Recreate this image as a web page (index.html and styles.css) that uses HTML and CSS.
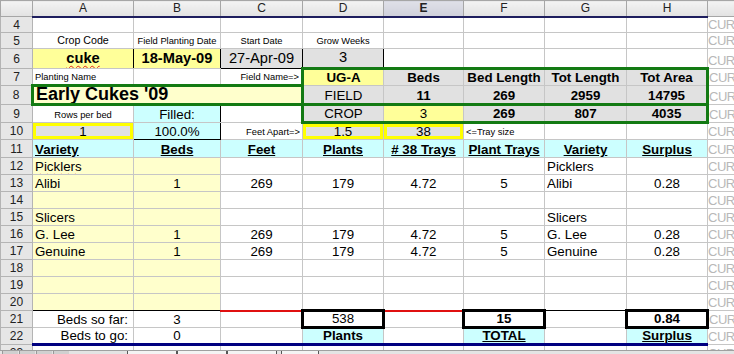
FILE: index.html
```html
<!DOCTYPE html>
<html>
<head>
<meta charset="utf-8">
<link rel="stylesheet" href="styles.css">
</head>
<body>
<div class="viewport">
<table class="sheet">
<colgroup>
<col class="w-rh"><col class="w-a"><col class="w-b"><col class="w-c"><col class="w-d"><col class="w-e"><col class="w-f"><col class="w-g"><col class="w-h"><col class="w-i">
</colgroup>
<tr class="hdr h16">
<th class="corner"></th><th>A</th><th>B</th><th>C</th><th>D</th><th class="sel">E</th><th>F</th><th>G</th><th>H</th><th class="last"></th>
</tr>
<tr class="h16">
<th>4</th><td></td><td></td><td></td><td></td><td></td><td></td><td></td><td></td><td class="cur">CUR</td>
</tr>
<tr class="h16">
<th>5</th><td class="m">Crop Code</td><td class="s">Field Planting Date</td><td class="s">Start Date</td><td class="s">Grow Weeks</td><td></td><td></td><td></td><td></td><td class="cur">CUR</td>
</tr>
<tr class="h20">
<th>6</th><td class="y b big kr"><span class="sp">cuke</span></td><td class="y b big kl kr">18-May-09</td><td class="g big kbox">27-Apr-09</td><td class="g big kbox">3</td><td class="kl"></td><td></td><td></td><td></td><td class="cur">CUR</td>
</tr>
<tr class="h17">
<th>7</th><td class="s l">Planting Name</td><td></td><td class="s r">Field Name=&gt;</td><td class="y b gt gl">UG-A</td><td class="g b gt">Beds</td><td class="g b gt">Bed Length</td><td class="g b gt">Tot Length</td><td class="g b gt gr">Tot Area</td><td class="cur">CUR</td>
</tr>
<tr class="h19">
<th>8</th><td colspan="3" class="py b xl l gt gb gl">Early Cukes '09</td><td class="g gl gb">FIELD</td><td class="g b gb">11</td><td class="g b gb">269</td><td class="g b gb">2959</td><td class="g b gb gr">14795</td><td class="cur">CUR</td>
</tr>
<tr class="h18">
<th>9</th><td class="s">Rows per bed</td><td class="cy kr">Filled:</td><td class="kl"></td><td class="g gl gb">CROP</td><td class="y gb">3</td><td class="g b gb">269</td><td class="g b gb">807</td><td class="g b gb gr">4035</td><td class="cur">CUR</td>
</tr>
<tr class="h17">
<th>10</th><td class="g ybox">1</td><td class="cy kr kb">100.0%</td><td class="s r kl">Feet Apart=&gt;</td><td class="g ybox">1.5</td><td class="g ybox">38</td><td class="s l">&lt;=Tray size</td><td></td><td></td><td class="cur">CUR</td>
</tr>
<tr class="h18">
<th>11</th><td class="cy b u l kt">Variety</td><td class="cy b u kt">Beds</td><td class="cy b u">Feet</td><td class="cy b u">Plants</td><td class="cy b u"># 38 Trays</td><td class="cy b u">Plant Trays</td><td class="cy b u">Variety</td><td class="cy b u">Surplus</td><td class="cur">CUR</td>
</tr>
<tr class="h17">
<th>12</th><td class="py l"><span class="sp">Picklers</span></td><td class="py"></td><td></td><td></td><td></td><td></td><td class="l">Picklers</td><td></td><td class="cur">CUR</td>
</tr>
<tr class="h17">
<th>13</th><td class="py l">Alibi</td><td class="py">1</td><td>269</td><td>179</td><td>4.72</td><td>5</td><td class="l">Alibi</td><td>0.28</td><td class="cur">CUR</td>
</tr>
<tr class="h17">
<th>14</th><td class="py"></td><td class="py"></td><td></td><td></td><td></td><td></td><td></td><td></td><td class="cur">CUR</td>
</tr>
<tr class="h17">
<th>15</th><td class="py l">Slicers</td><td class="py"></td><td></td><td></td><td></td><td></td><td class="l">Slicers</td><td></td><td class="cur">CUR</td>
</tr>
<tr class="h17">
<th>16</th><td class="py l">G. Lee</td><td class="py">1</td><td>269</td><td>179</td><td>4.72</td><td>5</td><td class="l">G. Lee</td><td>0.28</td><td class="cur">CUR</td>
</tr>
<tr class="h17">
<th>17</th><td class="py l">Genuine</td><td class="py">1</td><td>269</td><td>179</td><td>4.72</td><td>5</td><td class="l">Genuine</td><td>0.28</td><td class="cur">CUR</td>
</tr>
<tr class="h17">
<th>18</th><td class="py"></td><td class="py"></td><td></td><td></td><td></td><td></td><td></td><td></td><td class="cur">CUR</td>
</tr>
<tr class="h17">
<th>19</th><td class="py"></td><td class="py"></td><td></td><td></td><td></td><td></td><td></td><td></td><td class="cur">CUR</td>
</tr>
<tr class="h17">
<th>20</th><td class="py kb"></td><td class="py kb"></td><td class="rb"></td><td class="rb"></td><td class="rb"></td><td></td><td class="kb"></td><td></td><td class="cur">CUR</td>
</tr>
<tr class="h17">
<th>21</th><td class="r kt">Beds so far:</td><td class="kt">3</td><td></td><td class="box">538</td><td></td><td class="b box">15</td><td class="kt"></td><td class="b box">0.84</td><td class="cur">CUR</td>
</tr>
<tr class="h17">
<th>22</th><td class="r nb">Beds to go:</td><td class="nb">0</td><td class="nb"></td><td class="cy b nb">Plants</td><td class="nb"></td><td class="cy b u nb">TOTAL</td><td class="nb"></td><td class="cy b u nb">Surplus</td><td class="cur">CUR</td>
</tr>
<tr class="h17">
<th>23</th><td></td><td></td><td></td><td></td><td></td><td></td><td></td><td></td><td class="cur">CUR</td>
</tr>
</table>
</div>
<div class="tabs">
<span class="nav"></span><span class="nav"></span><span class="nav"></span><span class="nav"></span>
<span class="tab"></span><span class="tab"></span><span class="tab"></span><span class="tab short"></span>
</div>
</body>
</html>
```
FILE: styles.css
```css
html, body {
  margin: 0;
  padding: 0;
  overflow: hidden;
  background: #ffffff;
}

.viewport {
  height: 350px;
  overflow: hidden;
}

.sheet {
  border-collapse: collapse;
  table-layout: fixed;
  width: 747px;
  font-family: "Liberation Sans", Arial, sans-serif;
  font-size: 13.33px;
  color: #000;
}

.w-rh { width: 32px; }
.w-a { width: 101px; }
.w-b { width: 87px; }
.w-c { width: 82px; }
.w-d { width: 81px; }
.w-e { width: 80px; }
.w-f { width: 81px; }
.w-g { width: 82px; }
.w-h { width: 81px; }
.w-i { width: 40px; }

.sheet td {
  border: 1px solid #c6c6c6;
  padding: 0 2px 1px;
  white-space: nowrap;
  overflow: hidden;
  text-align: center;
  vertical-align: bottom;
  line-height: 13px;
}

.sheet th {
  border: 1px solid #b4b4b4;
  background: #e6e6e6;
  font-weight: normal;
  font-size: 12px;
  color: #222;
  padding: 0;
  text-align: center;
  vertical-align: middle;
  line-height: 12px;
}

.hdr th {
  background: linear-gradient(#f3f3f3, #e2e2e2);
  border-color: #a6a6a6;
  border-bottom: 2px solid #1e1e5e;
}

.hdr th.sel {
  background: linear-gradient(#dfe0e8, #cfd0da);
  font-weight: bold;
}

.hdr th.corner { border-bottom-color: #a6a6a6; border-bottom-width: 1px; }
.hdr th.last { border-bottom: 1px solid #a6a6a6; border-right: none; }

.h16 { height: 16px; }
.h17 { height: 17px; }
.h18 { height: 18px; }
.h19 { height: 19px; }
.h20 { height: 20px; }

/* text */
.b { font-weight: bold; }
.u { text-decoration: underline; }
.sheet td.l { text-align: left; }
.sheet td.r { text-align: right; padding-right: 5px; }
.sheet td.s { font-size: 9.33px; line-height: 11px; }
.sheet td.s.r { padding-right: 2px; }
.m { font-size: 10.67px; }
.sheet td.big { font-size: 14.67px; line-height: 15px; padding-bottom: 2px; }
.sheet td.xl { font-size: 18px; line-height: 15px; padding-left: 2px; padding-bottom: 1px; }
.sp {
  text-decoration: underline wavy #e02020;
  text-decoration-thickness: 1px;
  text-underline-offset: 2px;
}

.sheet td.cur {
  color: #b8b8b8;
  text-align: left;
  padding-left: 0;
  font-size: 13px;
  letter-spacing: -0.5px;
  border-right: none;
}

/* fills */
.y { background: #ffff99; }
.py { background: #ffffcc; }
.g { background: #e1e1e1; }
.cy { background: #ccffff; }

/* thin black borders */
.sheet td.kr { border-right: 1px solid #000; }
.sheet td.kl { border-left: 1px solid #000; }
.sheet td.kb { border-bottom: 1px solid #000; }
.sheet td.kt { border-top: 1px solid #000; }
.sheet td.kbox { border: 1px solid #000; }

/* green block */
.sheet td.gt { border-top: 3px solid #137a13; }
.sheet td.gb { border-bottom: 3px solid #137a13; }
.sheet td.gl { border-left: 3px solid #137a13; }
.sheet td.gr { border-right: 3px solid #137a13; }

/* yellow boxes */
.ybox { box-shadow: inset 0 0 0 3px #ffff00; }

/* red & total boxes */
.sheet td.rb { border-bottom: 2px solid #e01010; }
.sheet td.box { border: 3px solid #000; }
.sheet td.nb { border-bottom: 3px solid #000080; }

/* sheet tabs */
.tabs {
  height: 4px;
  background: #e4e4e4;
  border-top: 1px solid #a0a0a0;
  display: flex;
  align-items: flex-start;
  overflow: hidden;
}

.tabs .nav {
  width: 15px;
  height: 4px;
  margin-left: 1px;
  background: #d0d0d0;
  border-left: 1px solid #999;
}

.tabs .nav:first-child { margin-left: 2px; }

.tabs .tab {
  width: 48px;
  height: 4px;
  background: #f4f4f4;
  border-left: 1px solid #555;
  border-right: 1px solid #555;
}

.tabs .tab:nth-of-type(5) { margin-left: 58px; }
.tabs .tab.short { width: 36px; margin-left: 4px; }
```
